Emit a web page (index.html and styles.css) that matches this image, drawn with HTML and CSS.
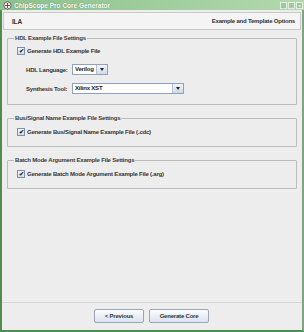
FILE: index.html
```html
<!DOCTYPE html>
<html lang="en">
<head>
  <meta charset="UTF-8">
  <title>ChipScope Pro Core Generator</title>
  <link rel="stylesheet" href="styles.css">
</head>
<body>
  <div class="window">
    <div class="titlebar">
      <svg class="app-icon" width="9" height="9" viewBox="0 0 9 9">
        <circle cx="4.5" cy="4.5" r="3.6" fill="#f4f4f4" stroke="#6a6a6a" stroke-width="1"/>
        <path d="M2 4.5h5M4.5 2v5" stroke="#a33" stroke-width="1"/>
      </svg>
      <span class="title">ChipScope Pro Core Generator</span>
      <div class="winbtns">
        <span class="wbtn">_</span>
        <span class="wbtn">□</span>
        <span class="wbtn">×</span>
      </div>
    </div>

    <div class="header">
      <span class="core">ILA</span>
      <span class="page">Example and Template Options</span>
    </div>

    <div class="main">
      <fieldset class="group first">
        <legend>HDL Example File Settings</legend>
        <label class="check"><span class="box">✔</span>Generate HDL Example File</label>
        <div class="row">
          <span class="lbl">HDL Language:</span>
          <span class="combo short"><span class="val">Verilog</span><span class="arrow"></span></span>
        </div>
        <div class="row">
          <span class="lbl">Synthesis Tool:</span>
          <span class="combo long"><span class="val">Xilinx XST</span><span class="arrow"></span></span>
        </div>
      </fieldset>

      <fieldset class="group">
        <legend>Bus/Signal Name Example File Settings</legend>
        <label class="check"><span class="box">✔</span>Generate Bus/Signal Name Example File (.cdc)</label>
      </fieldset>

      <fieldset class="group">
        <legend>Batch Mode Argument Example File Settings</legend>
        <label class="check"><span class="box">✔</span>Generate Batch Mode Argument Example File (.arg)</label>
      </fieldset>
    </div>

    <div class="footer">
      <button class="btn prev">&lt; Previous</button>
      <button class="btn gen">Generate Core</button>
    </div>
  </div>
</body>
</html>
```
FILE: styles.css
```css
html, body {
  margin: 0;
  padding: 0;
}
body {
  font-family: 'Liberation Sans', Arial, sans-serif;
  font-size: 6px;
  letter-spacing: -0.2px;
  font-weight: bold;
  color: #333;
  background: #5f9a5f;
  white-space: nowrap;
}
.window {
  width: 304px;
  height: 332px;
  box-sizing: border-box;
  border-left: 2px solid #4f8c4f;
  border-right: 2px solid #7fa483;
  border-bottom: 2px solid #4f8c4f;
  background-color: #ededed;
  background-image: radial-gradient(#e3e3e3 0.5px, transparent 0.6px);
  background-size: 2px 2px;
  display: flex;
  flex-direction: column;
}
.titlebar {
  height: 10px;
  margin: 0 -2px;
  background: linear-gradient(90deg, #8cc28b 0%, #a2cf9f 60%, #b3d8ae 100%);
  display: flex;
  align-items: center;
  padding: 0 1px 0 3px;
  color: #fff;
  font-size: 6.5px;
  letter-spacing: 0;
  text-shadow: 0 0 1px #4f7a4f;
}
.app-icon {
  margin-right: 2px;
}
.title {
  flex: 1;
}
.winbtns {
  display: flex;
  gap: 1px;
}
.wbtn {
  width: 7px;
  height: 7px;
  border: 1px solid #e4f0e2;
  background: #9cc89a;
  font-size: 6px;
  line-height: 6px;
  text-align: center;
  color: #fff;
  box-sizing: border-box;
}
.header {
  margin: 2px 1px 0 1px;
  height: 18px;
  box-sizing: border-box;
  border: 1px solid #cacaca;
  background: #f4f4f4;
  display: flex;
  align-items: center;
  justify-content: space-between;
  padding: 0 5px 0 8px;
}
.core {
  font-size: 6.5px;
}
.main {
  flex: 1;
  padding: 5px 5px 0 5px;
  display: flex;
  flex-direction: column;
  gap: 10px;
}
.group {
  margin: 0;
  padding: 6px 0 10px 9px;
  border: 1px solid #bcbcbc;
  border-radius: 1px;
  display: flex;
  flex-direction: column;
  gap: 9px;
}
.group.first {
  padding-top: 5px;
}
.group legend {
  padding: 0 1px;
  margin-left: -3px;
  color: #3a3a3a;
  line-height: 7px;
}
.check {
  display: flex;
  align-items: center;
  height: 8px;
}
.box {
  width: 6px;
  height: 6px;
  border: 1px solid #7d8fa8;
  background: linear-gradient(#f4f6fa, #d6dde8);
  color: #223;
  font-size: 6px;
  line-height: 6px;
  letter-spacing: 0;
  text-align: center;
  margin-right: 2px;
}
.row {
  display: flex;
  align-items: center;
  height: 11px;
  padding-left: 9px;
}
.row + .row {
  margin-top: -1px;
}
.lbl {
  width: 46px;
}
.combo {
  display: flex;
  height: 11px;
  box-sizing: border-box;
  border: 1px solid #8ea2be;
  background: #fff;
}
.combo .val {
  flex: 1;
  padding-left: 2px;
  line-height: 9px;
  color: #222;
}
.combo .arrow {
  width: 10px;
  border-left: 1px solid #b3c0d2;
  background: linear-gradient(#f2f5fa, #cfd9e6);
  position: relative;
}
.combo .arrow::after {
  content: '';
  position: absolute;
  left: 3px;
  top: 3px;
  border-left: 2px solid transparent;
  border-right: 2px solid transparent;
  border-top: 3px solid #222;
}
.short {
  width: 36px;
}
.long {
  width: 112px;
}
.footer {
  height: 26px;
  border-top: 1px solid #d6d6d6;
  display: flex;
  justify-content: center;
  align-items: center;
  gap: 5px;
  padding: 0 1px 1px 0;
}
.btn {
  font-family: inherit;
  font-size: 6px;
  letter-spacing: -0.2px;
  font-weight: bold;
  color: #333;
  height: 14px;
  padding: 0;
  border: 1px solid #9aa6b8;
  border-radius: 2px;
  background: linear-gradient(#fbfcfe, #dbe3ee);
}
.prev {
  width: 50px;
}
.gen {
  width: 60px;
}
```
